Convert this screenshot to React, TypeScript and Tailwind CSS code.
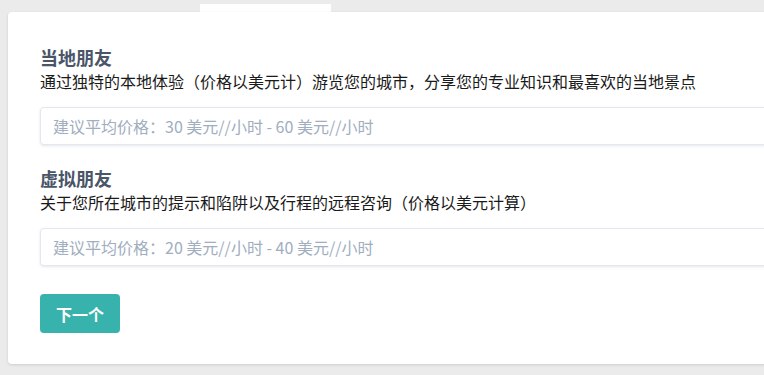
const font = '[font-family:"Noto_Sans_CJK_SC","Noto_Sans",sans-serif]';

type Plan = { title: string; desc: string; placeholder: string };

const plans: Plan[] = [
  {
    title: '当地朋友',
    desc: '通过独特的本地体验（价格以美元计）游览您的城市，分享您的专业知识和最喜欢的当地景点',
    placeholder: '建议平均价格：30 美元//小时 - 60 美元//小时',
  },
  {
    title: '虚拟朋友',
    desc: '关于您所在城市的提示和陷阱以及行程的远程咨询（价格以美元计算）',
    placeholder: '建议平均价格：20 美元//小时 - 40 美元//小时',
  },
];

function PlanField({ plan, first }: { plan: Plan; first: boolean }) {
  return (
    <div className={first ? '' : 'mt-[21px]'}>
      <h2 className="text-[18px] font-bold leading-[24px] text-[#4a5568]">{plan.title}</h2>
      <p className="text-[16px] leading-[24px] text-[#1a1a1a]">{plan.desc}</p>
      <input
        className="mt-[14px] block h-[38px] w-full rounded-[4px] border border-[#e2e8f0] bg-white px-3 text-[16px] text-[#4a5568] shadow-[0_1px_3px_rgba(0,0,0,0.1)] outline-none placeholder:text-[#a0aec0]"
        placeholder={plan.placeholder}
      />
    </div>
  );
}

export default function App() {
  return (
    <div className={`h-[375px] w-full overflow-hidden bg-[#ebebeb] pl-[8px] pt-[4px] ${font}`}>
      <div className="ml-[192px] h-[8px] w-[131px] bg-white" />
      <div className="w-[900px] rounded-[4px] bg-white pb-[31px] pl-[32px] pr-[32px] pt-[33px] shadow-[0_1px_3px_rgba(0,0,0,0.12)]">
        {plans.map((plan, i) => (
          <PlanField key={plan.title} plan={plan} first={i === 0} />
        ))}
        <button
          type="button"
          className="mt-[28px] h-[39px] w-[80px] rounded-[4px] bg-[#38b2ac] text-[16px] font-bold text-white"
        >
          下一个
        </button>
      </div>
    </div>
  );
}
